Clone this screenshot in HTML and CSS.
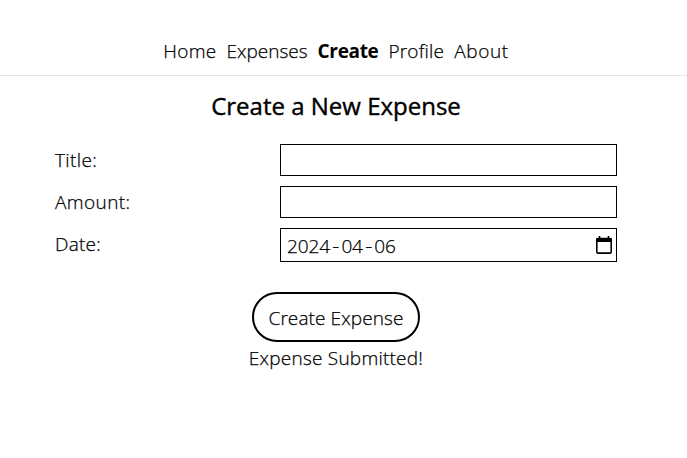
FILE: index.html
```html
<!DOCTYPE html>
<html lang="en">
<head>
<meta charset="utf-8">
<title>Create a New Expense</title>
<link rel="stylesheet" href="styles.css">
</head>
<body>
<nav class="nav">
  <a class="home">Home</a>
  <a class="expenses">Expenses</a>
  <a class="active">Create</a>
  <a class="profile">Profile</a>
  <a class="about">About</a>
</nav>
<main class="page">
  <h1 class="heading">Create a New Expense</h1>
  <form class="form">
    <div class="row"><label class="title" for="title">Title:</label><input class="field" id="title" type="text"></div>
    <div class="row"><label class="amount" for="amount">Amount:</label><input class="field" id="amount" type="text"></div>
    <div class="row"><label class="date">Date:</label>
      <div class="field date-field"><span class="date-value">2024<span class="dash">-</span>04<span class="dash">-</span>06</span>
        <svg class="calendar" width="16" height="18" viewBox="0 0 16 18"><path d="M3.5 0V3M12.5 0V3" stroke="#000" stroke-width="1.6"/><rect x=".8" y="2.5" width="14.4" height="14.6" rx="1" fill="none" stroke="#000" stroke-width="1.6"/><path d="M.5 2h15v4H.5z"/></svg>
      </div>
    </div>
    <button class="submit" type="button">Create Expense</button>
    <p class="status">Expense Submitted!</p>
  </form>
</main>
</body>
</html>
```

FILE: styles.css
```css
* { box-sizing: border-box; }
body {
  margin: 0;
  background: #fff;
  color: #000;
  font: 300 19px/28px "Segoe UI", "Open Sans", "Noto Sans", sans-serif;
  -webkit-text-stroke: .25px #000;
}
.nav {
  display: flex;
  justify-content: center;
  gap: 10px;
  height: 76px;
  padding: 37px 15px 0 0;
  border-bottom: 1px solid #e5e5e5;
}
.nav a { white-space: nowrap; }
.nav .home { letter-spacing: .3px; }
.nav .active { font-weight: 700; letter-spacing: -.35px; -webkit-text-stroke: 0; }
.nav .profile { letter-spacing: .2px; }
.nav .about { letter-spacing: .6px; }
.page { width: 672px; padding: 14px 55px 0; }
.heading {
  margin: 0 0 22px;
  font-size: 24px;
  line-height: 32px;
  font-weight: 500;
  text-align: center;
  white-space: nowrap;
  -webkit-text-stroke: .4px #000;
}
.form { display: flex; flex-direction: column; gap: 10px; }
.row { display: grid; grid-template-columns: 225px 337px; align-items: start; }
.row label { padding-top: 2px; letter-spacing: .4px; }
.row .date { letter-spacing: .25px; }
.field {
  width: 337px;
  height: 32px;
  margin: 0;
  padding: 0 6px;
  border: 1px solid #000;
  border-radius: 0;
  background: #fff;
  font: inherit;
}
.date-field { display: flex; align-items: center; justify-content: space-between; height: 34px; padding: 0 4px 0 6px; }
.date-value { padding-top: 2px; letter-spacing: -.1px; }
.dash {
  display: inline-block;
  width: 11.4px;
  text-align: center;
  transform: scaleX(1.15);
}
.calendar { display: block; }
.submit {
  align-self: center;
  width: 168px;
  height: 50px;
  margin: 20px 0 0;
  padding: 2px 0 0;
  border: 2px solid #000;
  border-radius: 25px;
  background: #fff;
  color: #000;
  font: inherit;
  letter-spacing: .1px;
  white-space: nowrap;
  -webkit-text-stroke: .25px #000;
}
.status { margin: -8px 0 0; letter-spacing: .23px; text-align: center; }
```
